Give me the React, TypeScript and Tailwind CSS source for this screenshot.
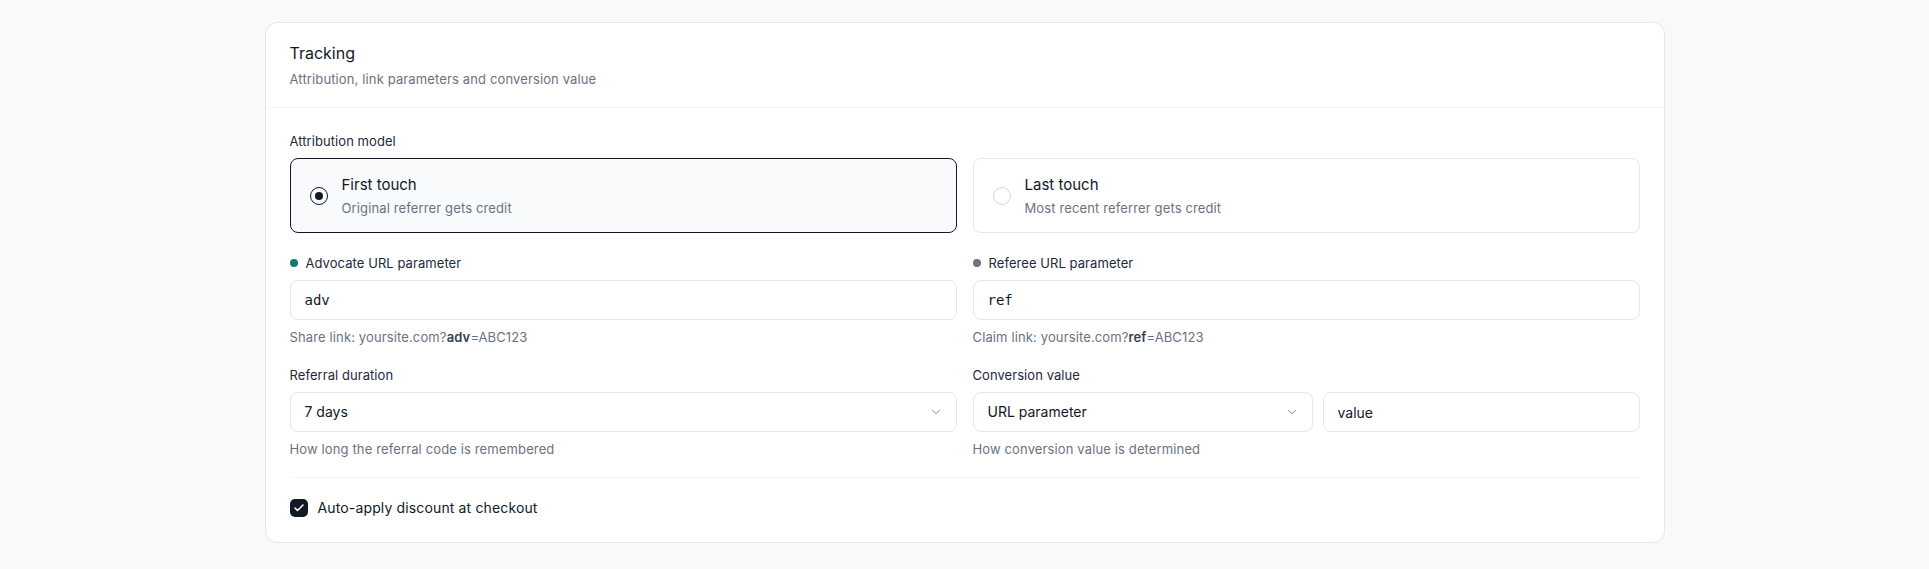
import { useState } from 'react';
import { Check, ChevronDown } from 'lucide-react';

type Attribution = 'first' | 'last';

const models: { id: Attribution; title: string; hint: string }[] = [
  { id: 'first', title: 'First touch', hint: 'Original referrer gets credit' },
  { id: 'last', title: 'Last touch', hint: 'Most recent referrer gets credit' },
];

function FieldLabel({ children, dot }: { children: React.ReactNode; dot?: string }) {
  return (
    <div className="flex items-center gap-2 text-[13px] leading-5 tracking-[0.005em] text-gray-800">
      {dot && <span className={`h-2 w-2 rounded-full ${dot}`} />}
      {children}
    </div>
  );
}

function Hint({ children }: { children: React.ReactNode }) {
  return (
    <p className="mt-[9px] text-[13px] leading-4 tracking-[0.01em] text-gray-500">{children}</p>
  );
}

function SelectBox({ value, className = '' }: { value: string; className?: string }) {
  return (
    <button
      type="button"
      className={`flex h-10 items-center justify-between rounded-lg border border-gray-200 bg-white pl-3.5 pr-[13px] text-left text-sm text-gray-900 ${className}`}
    >
      <span>{value}</span>
      <ChevronDown size={14} strokeWidth={1.5} className="text-gray-500" />
    </button>
  );
}

export default function App() {
  const [model, setModel] = useState<Attribution>('first');
  const [autoApply, setAutoApply] = useState(true);
  const [advParam, setAdvParam] = useState('adv');
  const [refParam, setRefParam] = useState('ref');

  return (
    <div className="min-h-screen bg-[#f8f9fb] pt-[22px] font-['Inter',sans-serif] antialiased">
      <div className="mx-auto w-[1400px] rounded-xl border border-gray-200 bg-white">
        <div className="border-b border-gray-100 px-6 py-[18px]">
          <h2 className="text-base leading-6 text-gray-900">Tracking</h2>
          <p className="mt-1 text-[13px] leading-5 tracking-[0.01em] text-gray-500">
            Attribution, link parameters and conversion value
          </p>
        </div>

        <div className="px-6 pb-6 pt-[23px]">
          <FieldLabel>Attribution model</FieldLabel>
          <div className="mt-[7px] grid grid-cols-2 gap-4">
            {models.map((m) => {
              const active = model === m.id;
              return (
                <button
                  key={m.id}
                  type="button"
                  onClick={() => setModel(m.id)}
                  className={`flex items-center gap-3.5 rounded-lg border px-[19px] py-[15px] text-left ${
                    active ? 'border-gray-900 bg-[#f9fafb]' : 'border-gray-200 bg-white'
                  }`}
                >
                  <span
                    className={`flex h-[18px] w-[18px] shrink-0 items-center justify-center rounded-full ${
                      active ? 'border-[1.5px] border-gray-900' : 'border border-gray-300'
                    }`}
                  >
                    {active && <span className="h-2 w-2 rounded-full bg-gray-900" />}
                  </span>
                  <span className="flex flex-col">
                    <span className="text-[15px] leading-[22px] text-gray-900">{m.title}</span>
                    <span className="mt-[3px] text-[13px] leading-[18px] tracking-[0.01em] text-gray-500">
                      {m.hint}
                    </span>
                  </span>
                </button>
              );
            })}
          </div>

          <div className="mt-5 grid grid-cols-2 gap-x-4 gap-y-5">
            <div>
              <FieldLabel dot="bg-[#157a6e]">Advocate URL parameter</FieldLabel>
              <input
                value={advParam}
                onChange={(e) => setAdvParam(e.target.value)}
                className="mt-[7px] h-10 w-full rounded-lg border border-gray-200 bg-white px-3.5 font-['DejaVu_Sans_Mono',monospace] text-sm text-gray-900 outline-none"
              />
              <Hint>
                Share link: yoursite.com?<span className="font-semibold text-gray-700">{advParam}</span>
                =ABC123
              </Hint>
            </div>
            <div>
              <FieldLabel dot="bg-[#6b7280]">Referee URL parameter</FieldLabel>
              <input
                value={refParam}
                onChange={(e) => setRefParam(e.target.value)}
                className="mt-[7px] h-10 w-full rounded-lg border border-gray-200 bg-white px-3.5 font-['DejaVu_Sans_Mono',monospace] text-sm text-gray-900 outline-none"
              />
              <Hint>
                Claim link: yoursite.com?<span className="font-semibold text-gray-700">{refParam}</span>
                =ABC123
              </Hint>
            </div>

            <div>
              <FieldLabel>Referral duration</FieldLabel>
              <SelectBox value="7 days" className="mt-[7px] w-full" />
              <Hint>How long the referral code is remembered</Hint>
            </div>
            <div>
              <FieldLabel>Conversion value</FieldLabel>
              <div className="mt-[7px] grid grid-cols-[340px_1fr] gap-2.5">
                <SelectBox value="URL parameter" />
                <input
                  defaultValue="value"
                  className="h-10 w-full rounded-lg border border-gray-200 bg-white px-3.5 text-sm text-gray-900 outline-none"
                />
              </div>
              <Hint>How conversion value is determined</Hint>
            </div>
          </div>

          <div className="mt-5 border-t border-gray-100 pt-5">
            <label className="flex cursor-pointer items-center gap-2.5 text-sm leading-5 tracking-[0.01em] text-gray-900">
              <button
                type="button"
                onClick={() => setAutoApply((v) => !v)}
                className={`flex h-[18px] w-[18px] items-center justify-center rounded-[5px] ${
                  autoApply ? 'bg-[#111827]' : 'border border-gray-300 bg-white'
                }`}
              >
                {autoApply && <Check size={12} strokeWidth={3} className="text-white" />}
              </button>
              Auto-apply discount at checkout
            </label>
          </div>
        </div>
      </div>
    </div>
  );
}
